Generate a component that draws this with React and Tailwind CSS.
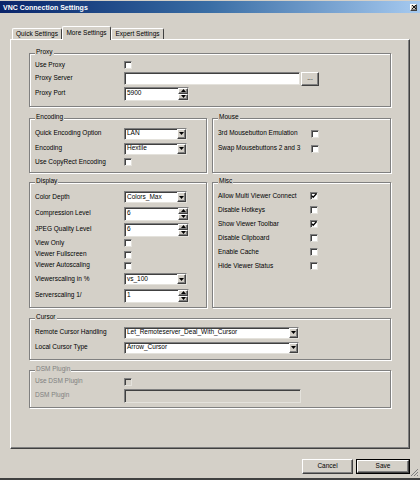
import React from "react";

// ── small Win2k-style widgets ──

const SUNKEN =
  "border border-t-[#808080] border-l-[#808080] border-r-[#e4e2dc] border-b-[#e4e2dc] shadow-[inset_1px_1px_0_#404040]";
const RAISED =
  "bg-[#d4d0c8] border border-t-white border-l-white border-r-[#404040] border-b-[#404040] shadow-[inset_-1px_-1px_0_#808080]";

function Tri({ dir = "down" }) {
  return (
    <svg width="5" height="3" viewBox="0 0 5 3">
      {dir === "down" ? <path d="M0 0H5L2.5 3Z" fill="#000" /> : <path d="M0 3H5L2.5 0Z" fill="#000" />}
    </svg>
  );
}

function CheckBox({ checked, disabled }) {
  return (
    <div
      className={`w-[8px] h-[8px] flex items-center justify-center ${SUNKEN} ${
        disabled ? "bg-[#d4d0c8]" : "bg-white"
      }`}
    >
      {checked && (
        <svg width="6" height="6" viewBox="0 0 6 6">
          <path d="M0.6 2.6L2.2 4.2L5.4 0.8" stroke="#000" strokeWidth="1.3" fill="none" />
        </svg>
      )}
    </div>
  );
}

function Select({ value, className }) {
  return (
    <div className={`flex bg-white ${SUNKEN} ${className}`}>
      <span className="flex-1 flex items-center pl-[2px]">{value}</span>
      <div className={`w-[9px] flex items-center justify-center ${RAISED}`}>
        <Tri />
      </div>
    </div>
  );
}

function Spinner({ value }) {
  return (
    <div className={`flex w-[65px] h-[14px] bg-white ${SUNKEN}`}>
      <span className="flex-1 flex items-center pl-[2px]">{value}</span>
      <div className="w-[10px] flex flex-col">
        <div className={`flex-1 flex items-center justify-center ${RAISED}`}>
          <Tri dir="up" />
        </div>
        <div className={`flex-1 flex items-center justify-center ${RAISED}`}>
          <Tri />
        </div>
      </div>
    </div>
  );
}

function Group({ title, className, disabled, children }) {
  return (
    <div
      className={`relative border border-[#808080] shadow-[inset_1px_1px_0_#fff,1px_1px_0_#fff] pl-[5px] ${className}`}
    >
      <span
        className={`absolute -top-[5px] left-[5px] px-[1px] bg-[#d4d0c8] leading-none ${
          disabled ? "text-[#808080]" : ""
        }`}
      >
        {title}
      </span>
      {children}
    </div>
  );
}

function Row({ label, className, labelW = "w-[89px]", disabled, children }) {
  return (
    <div className={`flex items-center ${className}`}>
      <span className={`${labelW} shrink-0 ${disabled ? "text-[#808080]" : ""}`}>{label}</span>
      {children}
    </div>
  );
}

function Tab({ active, className, children }) {
  return (
    <div
      className={`flex items-center justify-center border border-b-0 border-t-white border-l-white border-r-[#404040] rounded-t-[2px] bg-[#d4d0c8] ${
        active ? "h-[14px] -mb-[1px] relative z-10" : "h-[11px]"
      } ${className}`}
    >
      {children}
    </div>
  );
}

// ── Main ──

export default function App() {
  return (
    <div className="relative w-[420px] h-[480px] bg-[#d4d0c8] overflow-hidden font-['Liberation_Sans',Arial,sans-serif] text-[6.5px] leading-none text-black border-b-2 border-[#404040]">
      {/* title bar */}
      <div className="mt-[1px] h-[12px] flex items-center justify-between pl-[3px] pr-[3px] bg-gradient-to-r from-[#0a246a] via-[#3a6ea5] to-[#a6caf0]">
        <span className="text-white font-bold text-[7px]">VNC Connection Settings</span>
        <div className={`w-[7px] h-[7px] flex items-center justify-center ${RAISED}`}>
          <svg width="4" height="4" viewBox="0 0 4 4">
            <path d="M0 0L4 4M4 0L0 4" stroke="#000" strokeWidth="0.9" />
          </svg>
        </div>
      </div>

      {/* tabs */}
      <div className="flex items-end h-[13px] mt-[13px] pl-[12px]">
        <Tab className="w-[50px]">Quick Settings</Tab>
        <Tab active className="w-[49px]">More Settings</Tab>
        <Tab className="w-[53px]">Expert Settings</Tab>
      </div>

      {/* tab panel */}
      <div className="ml-[10px] w-[400px] h-[410px] border border-t-white border-l-white border-r-[#404040] border-b-[#404040] shadow-[inset_-1px_-1px_0_#808080] pl-[18px] pt-[13px]">
        <Group title="Proxy" className="w-[362px] h-[54px] pt-[5px]">
          <Row label="Use Proxy" className="h-[12px]">
            <CheckBox />
          </Row>
          <Row label="Proxy Server" className="h-[15px]">
            <div className={`w-[176px] h-[13px] bg-white ${SUNKEN}`} />
            <div className={`ml-[1px] w-[18px] h-[14px] flex items-center justify-center ${RAISED}`}>...</div>
          </Row>
          <Row label="Proxy Port" className="h-[15px]">
            <Spinner value="5900" />
          </Row>
        </Group>

        <div className="flex gap-[5px] mt-[11px]">
          <Group title="Encoding" className="w-[178px] h-[55px] pt-[7px]">
            <Row label="Quick Encoding Option" className="h-[15px]">
              <Select value="LAN" className="w-[63px] h-[12px]" />
            </Row>
            <Row label="Encoding" className="h-[15px]">
              <Select value="Hextile" className="w-[63px] h-[12px]" />
            </Row>
            <Row label="Use CopyRect Encoding" className="h-[12px]">
              <CheckBox />
            </Row>
          </Group>
          <Group title="Mouse" className="w-[179px] h-[55px] pt-[7px]">
            <Row label="3rd Mousebutton Emulation" labelW="w-[93px]" className="h-[15px]">
              <CheckBox />
            </Row>
            <Row label="Swap Mousebuttons 2 and 3" labelW="w-[93px]" className="h-[15px]">
              <CheckBox />
            </Row>
          </Group>
        </div>

        <div className="flex gap-[5px] mt-[9px]">
          <Group title="Display" className="w-[178px] h-[126px] pt-[6px]">
            <Row label="Color Depth" className="h-[16px]">
              <Select value="Colors_Max" className="w-[63px] h-[12px]" />
            </Row>
            <Row label="Compression Level" className="h-[17px]">
              <Spinner value="6" />
            </Row>
            <Row label="JPEG Quality Level" className="h-[15px]">
              <Spinner value="6" />
            </Row>
            <Row label="View Only" className="h-[12px]">
              <CheckBox />
            </Row>
            <Row label="Viewer Fullscreen" className="h-[11px]">
              <CheckBox />
            </Row>
            <Row label="Viewer Autoscaling" className="h-[11px]">
              <CheckBox />
            </Row>
            <Row label="Viewerscaling in %" className="h-[16px]">
              <Select value="vs_100" className="w-[63px] h-[12px]" />
            </Row>
            <Row label="Serverscaling 1/" className="h-[17px]">
              <Spinner value="1" />
            </Row>
          </Group>
          <Group title="Misc" className="w-[179px] h-[126px] pt-[6px]">
            <Row label="Allow Multi Viewer Connect" labelW="w-[92px]" className="h-[14px]">
              <CheckBox checked />
            </Row>
            <Row label="Disable Hotkeys" labelW="w-[92px]" className="h-[14px]">
              <CheckBox />
            </Row>
            <Row label="Show Viewer Toolbar" labelW="w-[92px]" className="h-[14px]">
              <CheckBox checked />
            </Row>
            <Row label="Disable Clipboard" labelW="w-[92px]" className="h-[14px]">
              <CheckBox />
            </Row>
            <Row label="Enable Cache" labelW="w-[92px]" className="h-[14px]">
              <CheckBox />
            </Row>
            <Row label="Hide Viewer Status" labelW="w-[92px]" className="h-[14px]">
              <CheckBox />
            </Row>
          </Group>
        </div>

        <Group title="Cursor" className="w-[362px] h-[42px] pt-[6px] mt-[10px]">
          <Row label="Remote Cursor Handling" className="h-[15px]">
            <Select value="Let_Remoteserver_Deal_With_Cursor" className="w-[175px] h-[12px]" />
          </Row>
          <Row label="Local Cursor Type" className="h-[15px]">
            <Select value="Arrow_Cursor" className="w-[175px] h-[12px]" />
          </Row>
        </Group>

        <Group title="DSM Plugin" disabled className="w-[362px] h-[38px] pt-[4px] mt-[10px]">
          <Row label="Use DSM Plugin" disabled className="h-[13px]">
            <CheckBox disabled />
          </Row>
          <Row label="DSM Plugin" disabled className="h-[15px]">
            <div className={`w-[177px] h-[14px] bg-[#d4d0c8] ${SUNKEN}`} />
          </Row>
        </Group>
      </div>

      {/* buttons */}
      <div className="flex justify-end gap-[3px] pr-[10px] mt-[10px]">
        <div className={`w-[51px] h-[15px] flex items-center justify-center ${RAISED}`}>Cancel</div>
        <div className="w-[54px] h-[15px] border border-black">
          <div className={`w-full h-full flex items-center justify-center ${RAISED}`}>Save</div>
        </div>
      </div>

      {/* resize grip */}
      <svg className="absolute right-[1px] bottom-[1px]" width="9" height="9" viewBox="0 0 9 9">
        <path d="M8 1L1 8M8 4L4 8M8 7L7 8" stroke="#808080" strokeWidth="1" />
      </svg>
    </div>
  );
}
